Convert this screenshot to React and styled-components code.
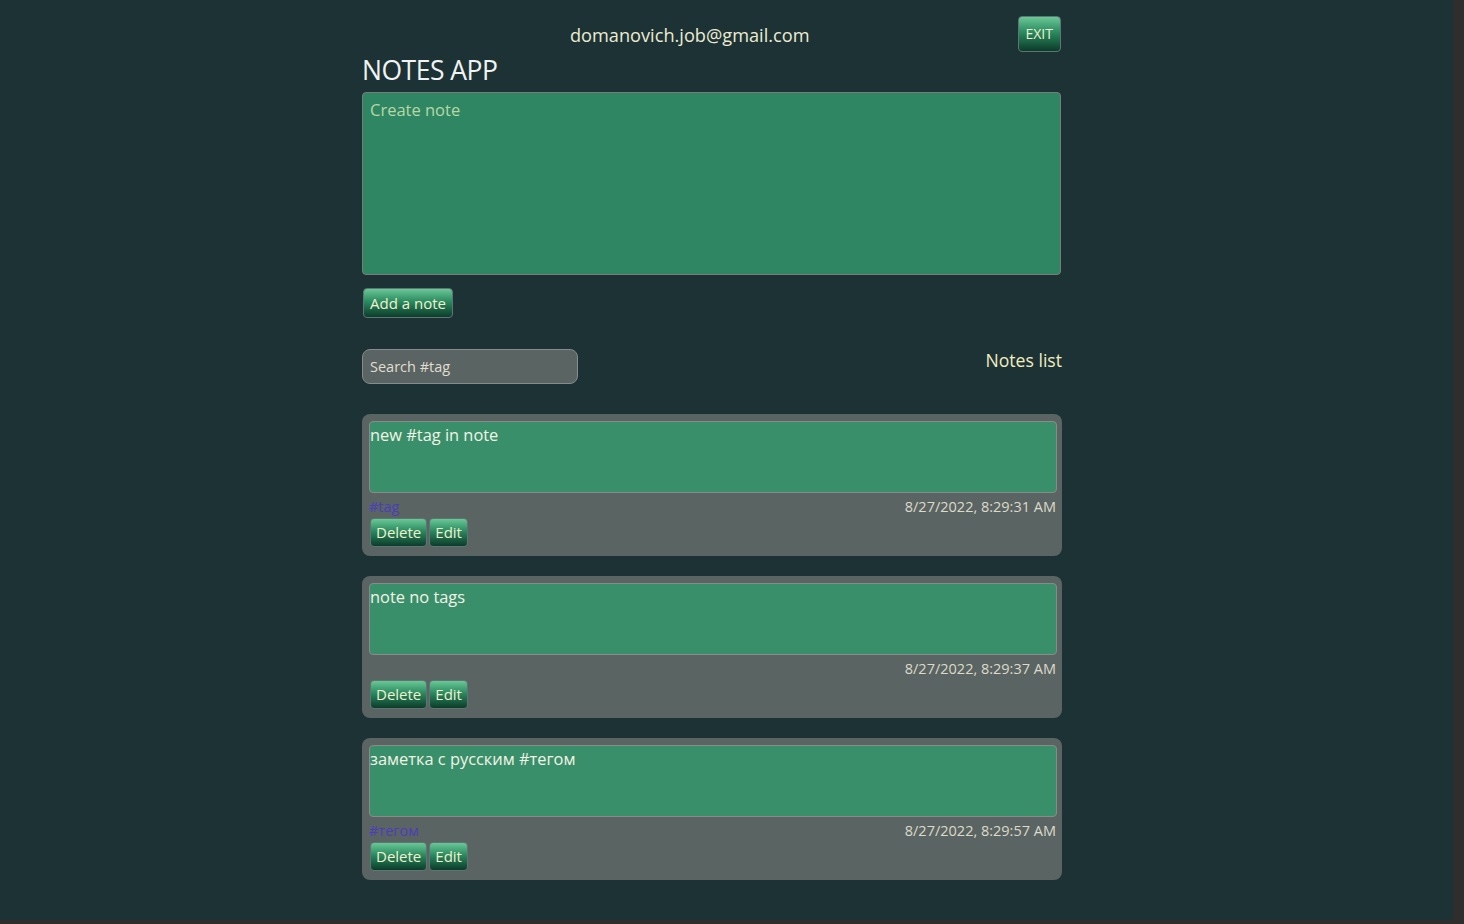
import React from "react";
import styled, { createGlobalStyle } from "styled-components";

const GlobalStyle = createGlobalStyle`
  *, *::before, *::after {
    box-sizing: border-box;
  }
  html, body {
    margin: 0;
    padding: 0;
    background: #302d2d;
    font-family: "Open Sans", "Noto Sans", sans-serif;
  }
`;

const notes = [
  { id: 1, text: "new #tag in note", tags: ["#tag"], date: "8/27/2022, 8:29:31 AM" },
  { id: 2, text: "note no tags", tags: [], date: "8/27/2022, 8:29:37 AM" },
  { id: 3, text: "заметка с русским #тегом", tags: ["#тегом"], date: "8/27/2022, 8:29:57 AM" },
];

const Page = styled.div`
  width: 1453px;
  height: 920px;
  background: #1c3234;
  overflow: hidden;
`;

const Container = styled.div`
  width: 699px;
  margin-left: 362px;
  padding-top: 16px;
  display: flex;
  flex-direction: column;
`;

const Header = styled.header`
  display: flex;
  align-items: center;
  height: 36px;
`;

const Email = styled.div`
  flex: 1;
  text-align: center;
  font-size: 18.2px;
  color: #ecebd2;
  padding-top: 2px;
`;

const GreenButton = styled.button`
  font-family: inherit;
  font-size: ${(p) => p.$size || 15}px;
  color: #f2f0cf;
  height: ${(p) => p.$h || 30}px;
  padding: 0 ${(p) => p.$px || 6}px;
  border: 1px solid #5f7575;
  border-radius: 4px;
  background: linear-gradient(to bottom, #6ac896 0%, #2a8a5f 45%, #0c3c2a 100%);
  cursor: pointer;
  line-height: 1;
`;

const Title = styled.h1`
  margin: 0;
  font-size: 26.5px;
  font-weight: 400;
  color: #f1f3f3;
  line-height: 36px;
  letter-spacing: -0.5px;
`;

const CreateArea = styled.div`
  margin-top: 4px;
  height: 183px;
  background: #2e8762;
  border: 1px solid #7b7b7b;
  border-radius: 4px;
  padding: 5px 7px;
  font-size: 16.5px;
  color: #b9d6a8;
`;

const AddRow = styled.div`
  margin-top: 13px;
  padding-left: 1px;
`;

const ListBar = styled.div`
  margin-top: 31px;
  margin-right: -1px;
  display: flex;
  justify-content: space-between;
  align-items: flex-start;
`;

const Search = styled.div`
  width: 216px;
  height: 35px;
  background: #5a6463;
  border: 1px solid #858c8c;
  border-radius: 8px;
  padding: 0 7px;
  display: flex;
  align-items: center;
  font-size: 14.5px;
  color: #e0ded0;
`;

const ListTitle = styled.div`
  font-size: 17.6px;
  color: #f2eec0;
  margin-top: -1px;
`;

const Notes = styled.div`
  margin-top: 30px;
  margin-right: -1px;
  display: flex;
  flex-direction: column;
  gap: 20px;
`;

const Card = styled.div`
  background: #5a6463;
  border-radius: 8px;
  padding: 7px 5px 8px 7px;
  height: 142px;
`;

const NoteText = styled.div`
  height: 72px;
  background: #3a8f6b;
  border: 1px solid #8a8a8a;
  border-radius: 4px;
  font-size: 16.4px;
  color: #f3f3e6;
  padding: 1px 0 0 0;
  line-height: 24px;
`;

const Meta = styled.div`
  display: flex;
  justify-content: space-between;
  align-items: center;
  height: 24px;
  margin-top: 1px;
  padding-right: 1px;
  font-size: 14.5px;
`;

const Tag = styled.span`
  color: #4b3dbd;
`;

const Date = styled.span`
  color: #dcdac8;
`;

const Actions = styled.div`
  display: flex;
  gap: 2px;
  padding-left: 1px;
`;

export default function App() {
  return (
    <Page>
      <GlobalStyle />
      <Container>
        <Header>
          <Email>domanovich.job@gmail.com</Email>
          <GreenButton $h={36} $px={7} $size={14}>EXIT</GreenButton>
        </Header>
        <Title>NOTES APP</Title>
        <CreateArea>Create note</CreateArea>
        <AddRow>
          <GreenButton $h={30} $px={6} $size={15}>Add a note</GreenButton>
        </AddRow>
        <ListBar>
          <Search>Search #tag</Search>
          <ListTitle>Notes list</ListTitle>
        </ListBar>
        <Notes>
          {notes.map((n) => (
            <Card key={n.id}>
              <NoteText>{n.text}</NoteText>
              <Meta>
                <Tag>{n.tags.join(" ")}</Tag>
                <Date>{n.date}</Date>
              </Meta>
              <Actions>
                <GreenButton $h={29} $px={5} $size={15}>Delete</GreenButton>
                <GreenButton $h={29} $px={5} $size={15}>Edit</GreenButton>
              </Actions>
            </Card>
          ))}
        </Notes>
      </Container>
    </Page>
  );
}
